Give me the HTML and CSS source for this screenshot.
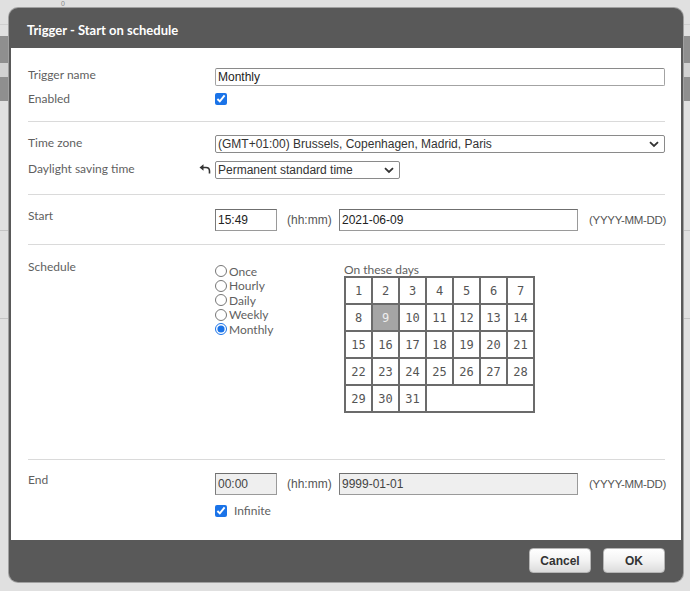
FILE: index.html
```html
<!DOCTYPE html>
<html>
<head>
<meta charset="utf-8">
<link rel="stylesheet" href="styles.css">
</head>
<body>
<div class="backdrop-mark">0</div>
<div class="modal">
  <div class="modal-header">Trigger - Start on schedule</div>
  <div class="modal-body">
    <div class="section s1">
      <div class="row r-name">
        <div class="label">Trigger name</div>
        <div class="ctrl"><div class="input full">Monthly</div></div>
      </div>
      <div class="row r-enabled">
        <div class="label">Enabled</div>
        <div class="ctrl"><input type="checkbox" class="cb" checked></div>
      </div>
    </div>
    <div class="sep"></div>
    <div class="section s2">
      <div class="row r-tz">
        <div class="label">Time zone</div>
        <div class="ctrl">
          <div class="select full"><span>(GMT+01:00) Brussels, Copenhagen, Madrid, Paris</span>
            <svg class="chev" width="10" height="7" viewBox="0 0 10 7"><path d="M1 1.2 L5 5 L9 1.2" fill="none" stroke="#333" stroke-width="1.8"/></svg>
          </div>
        </div>
      </div>
      <div class="row r-dst">
        <div class="label label-icon">Daylight saving time
          <svg class="undo" width="12" height="10" viewBox="0 0 12 10"><path d="M0.5 3.5 L4.5 0.3 L4.5 6.7 Z" fill="#333"/><path d="M4 3.5 H7 Q10.5 3.5 10.5 7 V9.5" fill="none" stroke="#333" stroke-width="1.6"/></svg>
        </div>
        <div class="ctrl">
          <div class="select dst"><span>Permanent standard time</span>
            <svg class="chev" width="10" height="7" viewBox="0 0 10 7"><path d="M1 1.2 L5 5 L9 1.2" fill="none" stroke="#333" stroke-width="1.8"/></svg>
          </div>
        </div>
      </div>
    </div>
    <div class="sep"></div>
    <div class="section s3">
      <div class="row r-start">
        <div class="label">Start</div>
        <div class="ctrl datetime">
          <div class="input tall time">15:49</div>
          <span class="hint hm">(hh:mm)</span>
          <div class="input tall date">2021-06-09</div>
          <span class="hint ymd">(YYYY-MM-DD)</span>
        </div>
      </div>
    </div>
    <div class="sep"></div>
    <div class="section s4">
      <div class="row r-sched">
        <div class="label">Schedule</div>
        <div class="ctrl sched">
          <div class="radios">
            <label class="radio"><input type="radio" name="f">Once</label>
            <label class="radio"><input type="radio" name="f">Hourly</label>
            <label class="radio"><input type="radio" name="f">Daily</label>
            <label class="radio"><input type="radio" name="f">Weekly</label>
            <label class="radio"><input type="radio" name="f" checked>Monthly</label>
          </div>
          <div class="days">
            <div class="days-title">On these days</div>
            <div class="cal">
              <div class="d">1</div><div class="d">2</div><div class="d">3</div><div class="d">4</div><div class="d">5</div><div class="d">6</div><div class="d">7</div>
              <div class="d">8</div><div class="d sel">9</div><div class="d">10</div><div class="d">11</div><div class="d">12</div><div class="d">13</div><div class="d">14</div>
              <div class="d">15</div><div class="d">16</div><div class="d">17</div><div class="d">18</div><div class="d">19</div><div class="d">20</div><div class="d">21</div>
              <div class="d">22</div><div class="d">23</div><div class="d">24</div><div class="d">25</div><div class="d">26</div><div class="d">27</div><div class="d">28</div>
              <div class="d">29</div><div class="d">30</div><div class="d">31</div><div class="d blank"></div>
            </div>
          </div>
        </div>
      </div>
    </div>
    <div class="sep"></div>
    <div class="section s5">
      <div class="row r-end">
        <div class="label">End</div>
        <div class="ctrl">
          <div class="datetime">
            <div class="input tall time disabled">00:00</div>
            <span class="hint hm">(hh:mm)</span>
            <div class="input tall date disabled">9999-01-01</div>
            <span class="hint ymd">(YYYY-MM-DD)</span>
          </div>
          <label class="infinite"><input type="checkbox" class="cb" checked>Infinite</label>
        </div>
      </div>
    </div>
  </div>
  <div class="modal-footer">
    <button class="btn">Cancel</button>
    <button class="btn">OK</button>
  </div>
</div>
</body>
</html>
```

FILE: styles.css
```css
html, body {
  margin: 0;
  padding: 0;
}
body {
  width: 690px;
  height: 591px;
  overflow: hidden;
  padding-top: 8px;
  box-sizing: border-box;
  font-family: "Liberation Sans", Arial, sans-serif;
  background:
    linear-gradient(to bottom,
      #e0e0e0 0, #e0e0e0 24px, #cfcfcf 24px, #cfcfcf 25px,
      #e0e0e0 25px, #e0e0e0 36px,
      #8f8f8f 36px, #8f8f8f 63px,
      #d2d2d2 63px, #d2d2d2 77px,
      #8f8f8f 77px, #8f8f8f 101px,
      #e0e0e0 101px, #e0e0e0 230px,
      #c4c4c4 230px, #c4c4c4 231px,
      #e0e0e0 231px, #e0e0e0 318px,
      #c4c4c4 318px, #c4c4c4 319px,
      #e0e0e0 319px);
  position: relative;
}
.backdrop-mark {
  position: absolute;
  left: 61px;
  top: 0;
  font-size: 7px;
  line-height: 7px;
  color: #888;
}
.modal {
  margin-left: 9px;
  width: 674px;
  height: 574px;
  background: #595959;
  border-radius: 9px;
  box-shadow: 0 0 0 1px #a0a0a0;
  display: flex;
  flex-direction: column;
  overflow: hidden;
}
.modal-header {
  height: 40px;
  flex: none;
  box-sizing: border-box;
  padding-left: 18px;
  display: flex;
  align-items: center;
  color: #fff;
  font-family: Lato, "Noto Sans", sans-serif;
  font-weight: 700;
  font-size: 13px;
  padding-top: 4px;
}
.modal-body {
  height: 492px;
  flex: none;
  margin: 0 2px;
  background: #fff;
  box-sizing: border-box;
  padding: 0 16px 0 17px;
}
.modal-footer {
  flex: 1;
  display: flex;
  justify-content: flex-end;
  align-items: flex-start;
  gap: 12px;
  padding: 8px 18px 0 0;
}
.btn {
  width: 62px;
  height: 25px;
  border: 1px solid #b5b5b5;
  border-radius: 4px;
  background: linear-gradient(to bottom, #ffffff 0%, #f3f3f3 50%, #dcdcdc 100%);
  font-family: "Liberation Sans", Arial, sans-serif;
  font-weight: 700;
  font-size: 12px;
  color: #333;
  padding: 0;
}
.sep {
  height: 1px;
  background: #dadada;
}
.row {
  display: grid;
  grid-template-columns: 187px 1fr;
}
.label {
  font-family: Lato, "Noto Sans", sans-serif;
  font-size: 12px;
  color: #5f5f5f;
  line-height: 14px;
}
.label-icon {
  display: flex;
  justify-content: space-between;
  align-items: flex-start;
}
.undo {
  margin-top: 2px;
  margin-right: 4px;
}
.ctrl {
  min-width: 0;
}
.input, .select {
  box-sizing: border-box;
  height: 18px;
  border: 1px solid #a3a3a3;
  border-top-color: #8a8a8a;
  border-radius: 2px;
  font-size: 12px;
  color: #222;
  line-height: 16px;
  padding-left: 2px;
  white-space: nowrap;
  overflow: hidden;
}
.full {
  width: 450px;
}
.select {
  display: flex;
  justify-content: space-between;
  align-items: center;
  padding-right: 5px;
  border-color: #8a8a8a;
  color: #333;
}
.select.dst {
  width: 185px;
}
.input.tall {
  height: 22px;
  line-height: 20px;
  border-color: #9a9a9a;
  border-top-color: #6f6f6f;
  border-left-color: #7a7a7a;
  border-radius: 0;
}
.datetime {
  display: flex;
  align-items: center;
}
.time {
  width: 62px;
  flex: none;
}
.date {
  width: 239px;
  flex: none;
}
.hint {
  font-size: 12px;
  color: #555;
  white-space: nowrap;
}
.hm {
  width: 62px;
  padding-left: 10px;
  box-sizing: border-box;
  flex: none;
}
.ymd {
  padding-left: 11px;
  font-size: 11.5px;
  letter-spacing: -0.3px;
}
.disabled {
  background: #efefef;
  color: #444;
}
.cb {
  width: 12px;
  height: 12px;
  margin: 0;
  accent-color: #1a73e8;
  display: block;
}

/* section spacing */
.s1 { padding-top: 17px; padding-bottom: 15px; }
.r-name .label { padding-top: 3px; }
.r-name .ctrl { padding-top: 3px; }
.r-enabled { margin-top: 6px; }
.r-enabled .ctrl { padding-top: 1px; }
.s2 { padding-top: 13px; padding-bottom: 15px; }
.r-tz .label { padding-top: 1px; }
.r-dst { margin-top: 8px; }
.r-dst .label { padding-top: 1px; }
.s3 { padding-top: 14px; padding-bottom: 13px; }
.r-start .label { padding-top: 0; }
.s4 { padding-top: 15px; height: 214px; box-sizing: border-box; }
.s5 { padding-top: 13px; }

.sched {
  display: flex;
}
.radios {
  width: 129px;
  flex: none;
  display: flex;
  flex-direction: column;
  padding-top: 4px;
}
.radio {
  display: flex;
  align-items: center;
  height: 14.5px;
  font-family: Lato, "Noto Sans", sans-serif;
  font-size: 12px;
  color: #5f5f5f;
}
.radio input {
  width: 12px;
  height: 12px;
  margin: 0 2px 0 0;
  accent-color: #1a73e8;
}
.days-title {
  font-family: Lato, "Noto Sans", sans-serif;
  font-size: 12px;
  color: #5f5f5f;
  line-height: 14px;
  padding-top: 3px;
  margin-bottom: -1px;
}
.cal {
  display: grid;
  grid-template-columns: repeat(7, 25px);
  grid-auto-rows: 25px;
  gap: 2px;
  padding: 2px;
  background: #6b6b6b;
  width: max-content;
}
.d {
  background: #fff;
  display: flex;
  align-items: center;
  justify-content: center;
  font-family: "DejaVu Sans Mono", "Liberation Mono", monospace;
  font-size: 12px;
  color: #555;
}
.d.sel {
  background: #a5a5a5;
  color: #eee;
}
.d.blank {
  grid-column: span 4;
}
.infinite {
  display: flex;
  align-items: center;
  margin-top: 8px;
  font-family: Lato, "Noto Sans", sans-serif;
  font-size: 12px;
  color: #5f5f5f;
  gap: 7px;
}
```
